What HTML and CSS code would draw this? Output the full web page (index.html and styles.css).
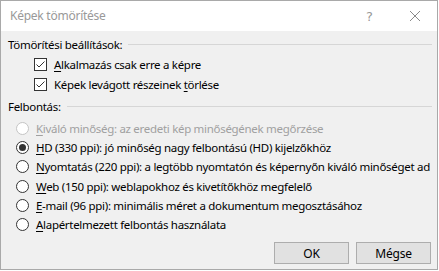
FILE: index.html
```html
<!DOCTYPE html>
<html lang="hu">
<head>
<meta charset="utf-8">
<title>Képek tömörítése</title>
<link rel="stylesheet" href="styles.css">
</head>
<body>
<div class="window">
  <div class="titlebar">
    <span class="title">Képek tömörítése</span>
    <div class="tb-buttons">
      <span class="help">?</span>
      <svg class="close" width="12" height="12" viewBox="0 0 12 12"><path d="M1 1 L11 11 M11 1 L1 11" stroke="#8a8a8a" stroke-width="1" fill="none"/></svg>
    </div>
  </div>
  <div class="content">
    <div class="group-head"><span>Tömörítési beállítások:</span><span class="rule"></span></div>
    <div class="checks">
      <div class="opt">
        <svg class="box" width="13" height="13" viewBox="0 0 13 13"><rect x="0.5" y="0.5" width="12" height="12" fill="#fff" stroke="#333"/><path d="M2.5 6.5 L5 9 L10.5 3.5" stroke="#333" stroke-width="1" fill="none"/></svg>
        <span><u>A</u>lkalmazás csak erre a képre</span>
      </div>
      <div class="opt">
        <svg class="box" width="13" height="13" viewBox="0 0 13 13"><rect x="0.5" y="0.5" width="12" height="12" fill="#fff" stroke="#333"/><path d="M2.5 6.5 L5 9 L10.5 3.5" stroke="#333" stroke-width="1" fill="none"/></svg>
        <span>Képek levágott részeinek <u>t</u>örlése</span>
      </div>
    </div>
    <div class="group-head second"><span>Felbontás:</span><span class="rule"></span></div>
    <div class="radios">
      <div class="opt disabled">
        <svg class="box" width="13" height="13" viewBox="0 0 13 13"><circle cx="6.5" cy="6.5" r="6" fill="#fff" stroke="#c4c4c4"/></svg>
        <span><u>K</u>iváló minőség: az eredeti kép minőségének megőrzése</span>
      </div>
      <div class="opt">
        <svg class="box" width="13" height="13" viewBox="0 0 13 13"><circle cx="6.5" cy="6.5" r="6" fill="#fff" stroke="#333"/><circle cx="6.5" cy="6.5" r="3.5" fill="#333"/></svg>
        <span><u>H</u>D (330 ppi): jó minőség nagy felbontású (HD) kijelzőkhöz</span>
      </div>
      <div class="opt">
        <svg class="box" width="13" height="13" viewBox="0 0 13 13"><circle cx="6.5" cy="6.5" r="6" fill="#fff" stroke="#333"/></svg>
        <span><u>N</u>yomtatás (220 ppi): a legtöbb nyomtatón és képernyőn kiváló minőséget ad</span>
      </div>
      <div class="opt">
        <svg class="box" width="13" height="13" viewBox="0 0 13 13"><circle cx="6.5" cy="6.5" r="6" fill="#fff" stroke="#333"/></svg>
        <span><u>W</u>eb (150 ppi): weblapokhoz és kivetítőkhöz megfelelő</span>
      </div>
      <div class="opt">
        <svg class="box" width="13" height="13" viewBox="0 0 13 13"><circle cx="6.5" cy="6.5" r="6" fill="#fff" stroke="#333"/></svg>
        <span><u>E</u>-mail (96 ppi): minimális méret a dokumentum megosztásához</span>
      </div>
      <div class="opt">
        <svg class="box" width="13" height="13" viewBox="0 0 13 13"><circle cx="6.5" cy="6.5" r="6" fill="#fff" stroke="#333"/></svg>
        <span><u>A</u>lapértelmezett felbontás használata</span>
      </div>
    </div>
    <div class="actions">
      <button class="btn">OK</button>
      <button class="btn">Mégse</button>
    </div>
  </div>
</div>
</body>
</html>
```
FILE: styles.css
```css
html, body {
  margin: 0;
  padding: 0;
  background: #ffffff;
}
body {
  font-family: "Noto Sans", "Open Sans", sans-serif;
  font-size: 11.5px;
  color: #000;
}
.window {
  width: 438px;
  height: 270px;
  box-sizing: border-box;
  border: 1px solid #a9a9a9;
  background: #f0f0f0;
  display: flex;
  flex-direction: column;
}
.titlebar {
  height: 30px;
  background: #fff;
  display: flex;
  align-items: center;
  padding-left: 9px;
  padding-right: 16px;
}
.title {
  color: #999;
  flex: 1;
  font-size: 12px;
  letter-spacing: -0.25px;
  padding-bottom: 1px;
}
.tb-buttons {
  display: flex;
  align-items: center;
  gap: 36px;
}
.help {
  color: #999;
  font-family: "DejaVu Sans", sans-serif;
  font-size: 13px;
}
.close {
  display: block;
}
.content {
  flex: 1;
  padding: 5px 5px 0 7px;
  display: flex;
  flex-direction: column;
  letter-spacing: -0.3px;
}
.group-head {
  height: 16px;
  display: flex;
  align-items: center;
}
.group-head .rule {
  flex: 1;
  height: 1px;
  background: #d6d6d6;
  margin-left: 6px;
}
.group-head.second {
  margin-top: 4px;
}
.checks {
  margin-top: 2px;
  margin-left: 26px;
  display: flex;
  flex-direction: column;
}
.checks .opt {
  height: 20px;
}
.opt {
  display: flex;
  align-items: center;
  gap: 7px;
  white-space: nowrap;
}
.opt .box {
  flex: none;
  display: block;
}
.opt u {
  text-decoration: underline;
  text-underline-offset: 2px;
}
.radios {
  margin-top: 5px;
  margin-left: 8px;
  display: flex;
  flex-direction: column;
}
.radios .opt {
  height: 19.2px;
}
.opt.disabled {
  color: #a0a0a0;
}
.actions {
  margin-top: 8px;
  display: flex;
  justify-content: flex-end;
  gap: 7px;
  padding-right: 1px;
}
.btn {
  font-family: inherit;
  font-size: 12px;
  letter-spacing: -0.2px;
  height: 22px;
  width: 75px;
  background: #e1e1e1;
  border: 1px solid #adadad;
  border-radius: 0;
  padding: 0;
  margin: 0;
  color: #000;
}
```
